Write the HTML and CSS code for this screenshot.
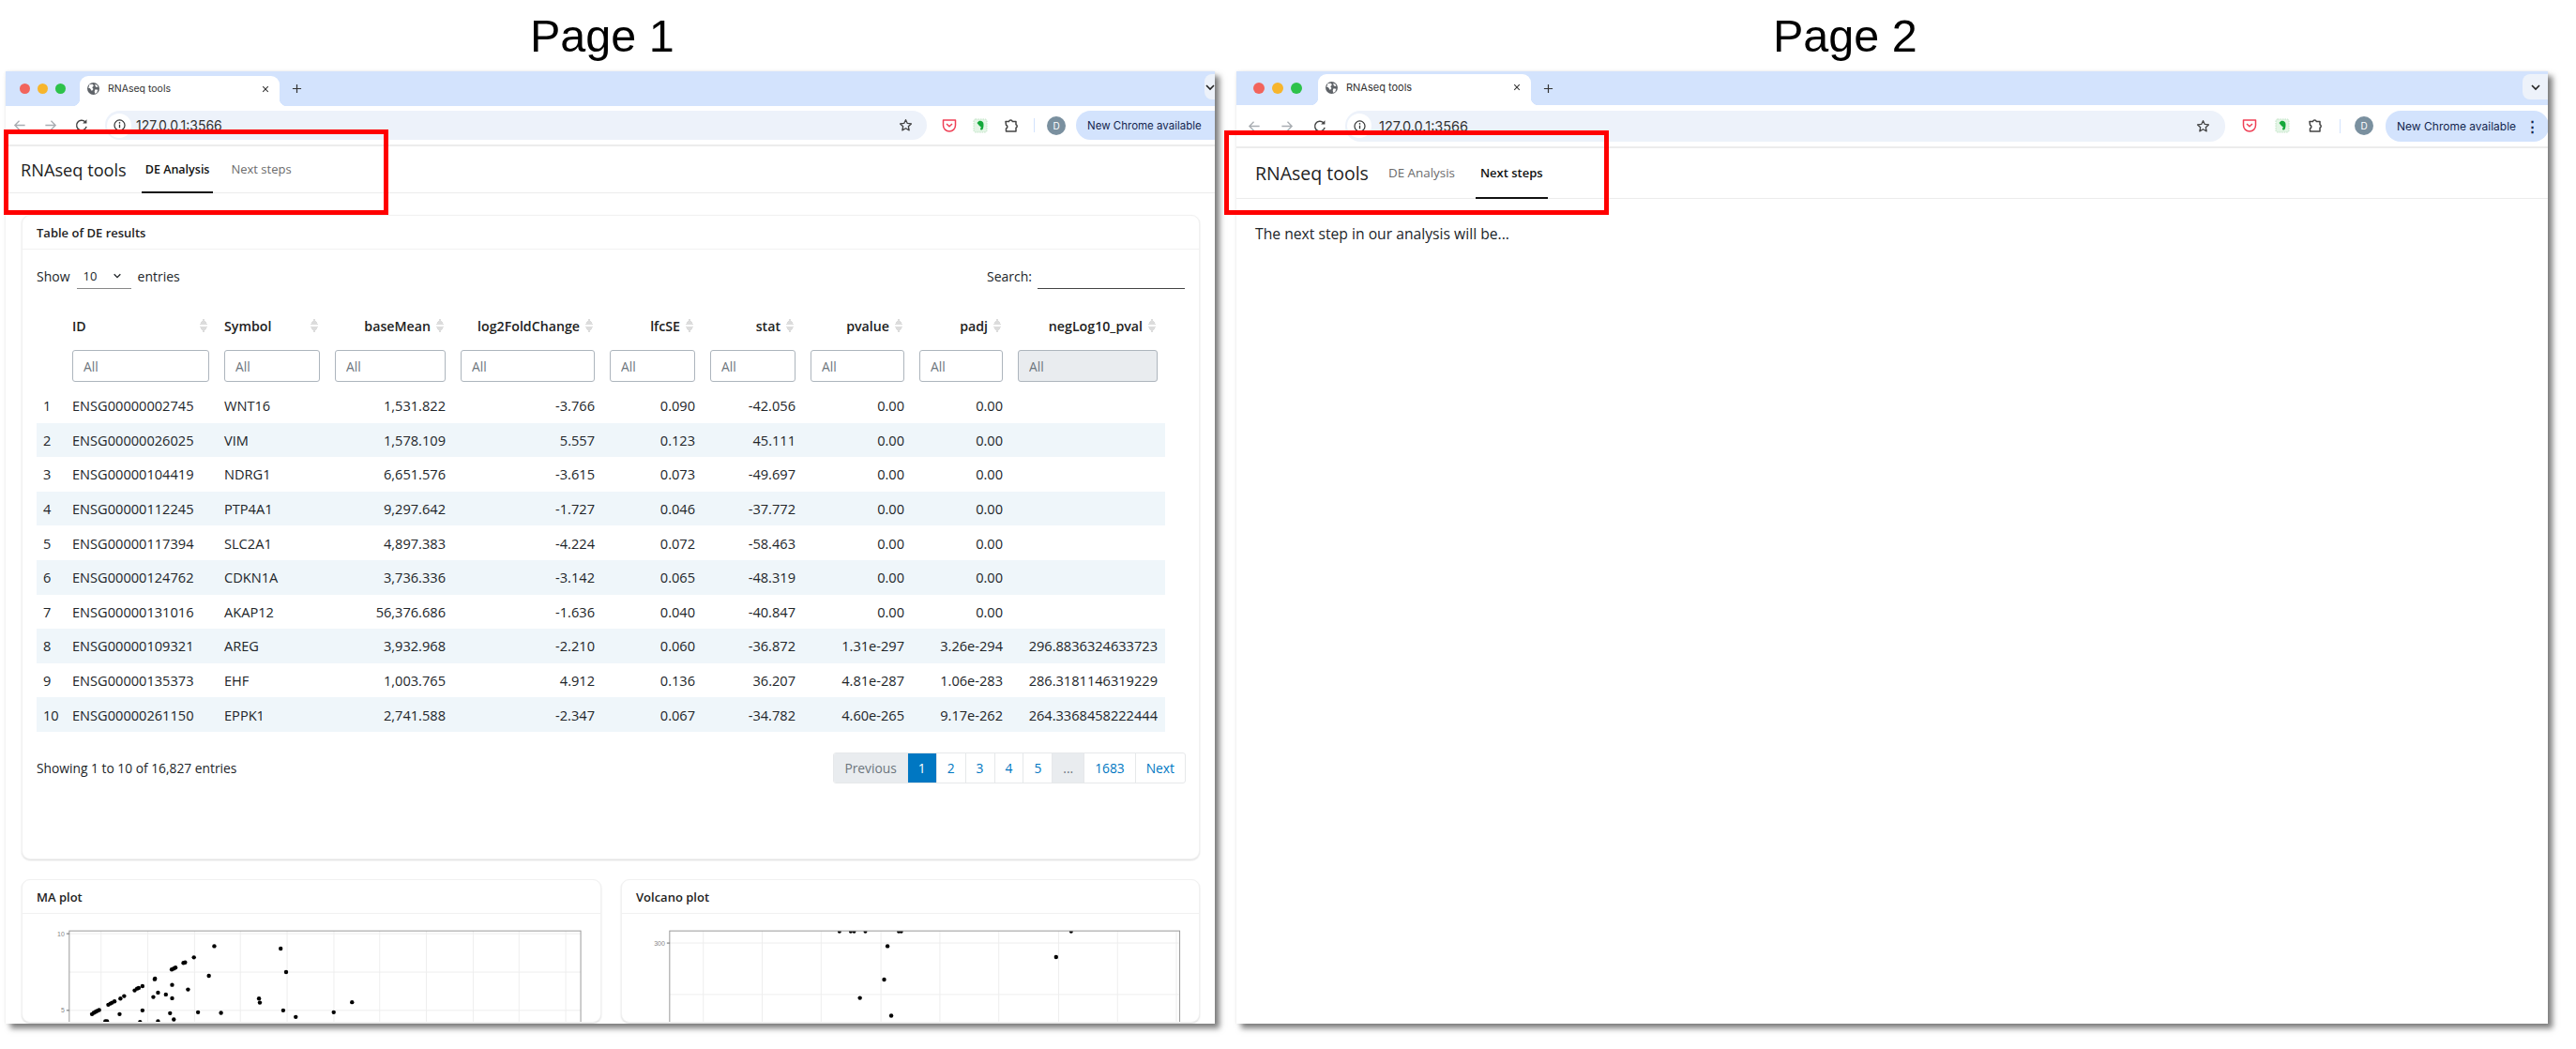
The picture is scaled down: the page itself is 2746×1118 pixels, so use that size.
FILE: index.html
```html
<!DOCTYPE html>
<html lang="en">
<head>
  <meta charset="UTF-8">
  <title>RNAseq tools - Page 1 and Page 2</title>
  <link rel="stylesheet" href="styles.css">
</head>
<body>
  <svg class="icon-defs" width="0" height="0" aria-hidden="true">
    <symbol id="i-globe" viewBox="0 0 16 16">
      <circle cx="8" cy="8" r="8" fill="#5f6368"/>
      <path d="M3 2.5 7 2l1.500 2-2 2.500 1.500 2L6 11 3.500 7.500 1.500 7zM10.500 9l3.500.5-1.500 4-2.500 1-.5-3zM10 2l3 1.500 1 2.500-3-.5z" fill="#fff"/>
    </symbol>
    <symbol id="i-back" viewBox="0 0 16 16">
      <path d="M14 8H2.500M7.500 3 2.500 8l5 5" fill="none" stroke="currentColor" stroke-width="1.400"/>
    </symbol>
    <symbol id="i-forward" viewBox="0 0 16 16">
      <path d="M2 8h11.500M8.500 3l5 5-5 5" fill="none" stroke="currentColor" stroke-width="1.400"/>
    </symbol>
    <symbol id="i-reload" viewBox="0 0 16 16">
      <path d="M13.500 9.500A5.700 5.700 0 1 1 12 4" fill="none" stroke="#444" stroke-width="1.500"/>
      <path d="M13.800 1.200v4.600H9.200z" fill="#444"/>
    </symbol>
    <symbol id="i-info" viewBox="0 0 16 16">
      <circle cx="8" cy="8" r="6.800" fill="none" stroke="#333" stroke-width="1.500"/>
      <path d="M8 7v4.500" stroke="#333" stroke-width="1.600"/>
      <circle cx="8" cy="4.800" r="1" fill="#333"/>
    </symbol>
    <symbol id="i-star" viewBox="0 0 16 16">
      <path d="m8 1.800 1.900 4 4.400.5-3.300 3 .9 4.400L8 11.500l-3.900 2.200.9-4.400-3.300-3 4.400-.5z" fill="none" stroke="#444" stroke-width="1.400" stroke-linejoin="round"/>
    </symbol>
    <symbol id="i-pocket" viewBox="0 0 16 16">
      <path d="M1.500 2h13v5.500a6.500 6.500 0 0 1-13 0z" fill="#fff" stroke="#ef4056" stroke-width="1.500" stroke-linejoin="round"/>
      <path d="m5 6 3 2.800L11 6" fill="none" stroke="#ef4056" stroke-width="1.500"/>
    </symbol>
    <symbol id="i-evernote" viewBox="0 0 16 16">
      <rect x="1" y="1" width="14" height="14" rx="2" fill="#e4f5e6" stroke="#bfe3c4" stroke-dasharray="1.500 1"/>
      <path d="M4.500 5 6.500 3c2-.8 5 0 5 3.500 0 2.500-.3 4-1 5.500-1.200 1-2.500.3-2.500-.8 0-1 1-1 1.300-.7-.5-1.500-2.300-2-3-3.200z" fill="#14a83b"/>
    </symbol>
    <symbol id="i-puzzle" viewBox="0 0 16 16">
      <path d="M2 3.500h3.500a2 2 0 0 1 3.800 0H13v3.300a1.800 1.800 0 0 1 0 3.400V14H2.500v-3a2 2 0 0 0 0-3.800z" fill="none" stroke="#444" stroke-width="1.500" stroke-linejoin="round"/>
    </symbol>
    <symbol id="i-chevron" viewBox="0 0 12 12">
      <path d="m2 4 4 4 4-4" fill="none" stroke="currentColor" stroke-width="1.600"/>
    </symbol>
    <symbol id="i-close" viewBox="0 0 10 10">
      <path d="m1.500 1.500 7 7m0-7-7 7" stroke="#333" stroke-width="1.300"/>
    </symbol>
    <symbol id="i-plus" viewBox="0 0 12 12">
      <path d="M6 1v10M1 6h10" stroke="#333" stroke-width="1.300"/>
    </symbol>
  </svg>

  <div class="headings">
    <h1 class="heading heading-1">Page 1</h1>
    <h1 class="heading heading-2">Page 2</h1>
  </div>

  <div class="shots">
    <!-- Page 1 -->
    <div class="shot shot-1">
      <div class="window">
        <div class="tabstrip">
          <div class="lights"><i class="light red"></i><i class="light amber"></i><i class="light green"></i></div>
          <div class="tab">
            <svg class="tab-fav"><use href="#i-globe"/></svg>
            <span class="tab-title">RNAseq tools</span>
            <svg class="tab-close"><use href="#i-close"/></svg>
          </div>
          <svg class="tab-plus"><use href="#i-plus"/></svg>
          <span class="tab-search"><svg class="tab-search-icon"><use href="#i-chevron"/></svg></span>
        </div>
        <div class="toolbar">
          <svg class="tool dim"><use href="#i-back"/></svg>
          <svg class="tool dim"><use href="#i-forward"/></svg>
          <svg class="tool"><use href="#i-reload"/></svg>
          <div class="omnibox">
            <span class="info-chip"><svg class="info-icon"><use href="#i-info"/></svg></span>
            <span class="url">127.0.0.1:3566</span>
            <svg class="star"><use href="#i-star"/></svg>
          </div>
          <svg class="tool ext first-ext"><use href="#i-pocket"/></svg>
          <svg class="tool ext"><use href="#i-evernote"/></svg>
          <svg class="tool ext"><use href="#i-puzzle"/></svg>
          <i class="divider"></i>
          <span class="avatar">D</span>
          <span class="update-chip">New Chrome available <span class="update-dots">&#8942;</span></span>
        </div>
        <nav class="navbar">
          <span class="brand">RNAseq tools</span>
          <a class="nav-tab active">DE Analysis</a>
          <a class="nav-tab">Next steps</a>
        </nav>
        <main class="page-main">
          <section class="card table-card">
            <header class="card-header">Table of DE results</header>
            <div class="card-body">
              <div class="dt-top">
                <div class="dt-length">
                  <span>Show</span>
                  <span class="dt-select">10 <svg class="dt-chevron"><use href="#i-chevron"/></svg></span>
                  <span>entries</span>
                </div>
                <div class="dt-search">
                  <span>Search:</span>
                  <span class="dt-search-input"></span>
                </div>
              </div>
              <table class="dt">
                <colgroup>
                  <col class="c-num"><col class="c-id"><col class="c-sym"><col class="c-base"><col class="c-fold">
                  <col class="c-se"><col class="c-stat"><col class="c-p"><col class="c-adj"><col class="c-neg">
                </colgroup>
                <thead>
                  <tr class="head-row">
                    <th></th>
                    <th><div class="th-in spread">ID<i class="sort"></i></div></th>
                    <th><div class="th-in spread">Symbol<i class="sort"></i></div></th>
                    <th><div class="th-in">baseMean<i class="sort"></i></div></th>
                    <th><div class="th-in">log2FoldChange<i class="sort"></i></div></th>
                    <th><div class="th-in">lfcSE<i class="sort"></i></div></th>
                    <th><div class="th-in">stat<i class="sort"></i></div></th>
                    <th><div class="th-in">pvalue<i class="sort"></i></div></th>
                    <th><div class="th-in">padj<i class="sort"></i></div></th>
                    <th><div class="th-in">negLog10_pval<i class="sort"></i></div></th>
                  </tr>
                  <tr class="filter-row">
                    <th></th>
                    <th><input class="filter" placeholder="All"></th>
                    <th><input class="filter" placeholder="All"></th>
                    <th><input class="filter" placeholder="All"></th>
                    <th><input class="filter" placeholder="All"></th>
                    <th><input class="filter" placeholder="All"></th>
                    <th><input class="filter" placeholder="All"></th>
                    <th><input class="filter" placeholder="All"></th>
                    <th><input class="filter" placeholder="All"></th>
                    <th><input class="filter off" placeholder="All" disabled></th>
                  </tr>
                </thead>
                <tbody>
                  <tr><td>1</td><td>ENSG00000002745</td><td>WNT16</td><td class="n">1,531.822</td><td class="n">-3.766</td><td class="n">0.090</td><td class="n">-42.056</td><td class="n">0.00</td><td class="n">0.00</td><td class="n"></td></tr>
                  <tr><td>2</td><td>ENSG00000026025</td><td>VIM</td><td class="n">1,578.109</td><td class="n">5.557</td><td class="n">0.123</td><td class="n">45.111</td><td class="n">0.00</td><td class="n">0.00</td><td class="n"></td></tr>
                  <tr><td>3</td><td>ENSG00000104419</td><td>NDRG1</td><td class="n">6,651.576</td><td class="n">-3.615</td><td class="n">0.073</td><td class="n">-49.697</td><td class="n">0.00</td><td class="n">0.00</td><td class="n"></td></tr>
                  <tr><td>4</td><td>ENSG00000112245</td><td>PTP4A1</td><td class="n">9,297.642</td><td class="n">-1.727</td><td class="n">0.046</td><td class="n">-37.772</td><td class="n">0.00</td><td class="n">0.00</td><td class="n"></td></tr>
                  <tr><td>5</td><td>ENSG00000117394</td><td>SLC2A1</td><td class="n">4,897.383</td><td class="n">-4.224</td><td class="n">0.072</td><td class="n">-58.463</td><td class="n">0.00</td><td class="n">0.00</td><td class="n"></td></tr>
                  <tr><td>6</td><td>ENSG00000124762</td><td>CDKN1A</td><td class="n">3,736.336</td><td class="n">-3.142</td><td class="n">0.065</td><td class="n">-48.319</td><td class="n">0.00</td><td class="n">0.00</td><td class="n"></td></tr>
                  <tr><td>7</td><td>ENSG00000131016</td><td>AKAP12</td><td class="n">56,376.686</td><td class="n">-1.636</td><td class="n">0.040</td><td class="n">-40.847</td><td class="n">0.00</td><td class="n">0.00</td><td class="n"></td></tr>
                  <tr><td>8</td><td>ENSG00000109321</td><td>AREG</td><td class="n">3,932.968</td><td class="n">-2.210</td><td class="n">0.060</td><td class="n">-36.872</td><td class="n">1.31e-297</td><td class="n">3.26e-294</td><td class="n">296.8836324633723</td></tr>
                  <tr><td>9</td><td>ENSG00000135373</td><td>EHF</td><td class="n">1,003.765</td><td class="n">4.912</td><td class="n">0.136</td><td class="n">36.207</td><td class="n">4.81e-287</td><td class="n">1.06e-283</td><td class="n">286.3181146319229</td></tr>
                  <tr><td>10</td><td>ENSG00000261150</td><td>EPPK1</td><td class="n">2,741.588</td><td class="n">-2.347</td><td class="n">0.067</td><td class="n">-34.782</td><td class="n">4.60e-265</td><td class="n">9.17e-262</td><td class="n">264.3368458222444</td></tr>
                </tbody>
              </table>
              <div class="dt-bottom">
                <span class="dt-info">Showing 1 to 10 of 16,827 entries</span>
                <div class="pager">
                  <span class="pg off">Previous</span>
                  <span class="pg cur">1</span>
                  <span class="pg">2</span>
                  <span class="pg">3</span>
                  <span class="pg">4</span>
                  <span class="pg">5</span>
                  <span class="pg off">...</span>
                  <span class="pg">1683</span>
                  <span class="pg">Next</span>
                </div>
              </div>
            </div>
          </section>

          <div class="plot-row">
            <section class="card">
              <header class="card-header">MA plot</header>
              <svg class="plot" viewBox="23 976 618 115">
                <g class="grid">
                  <path d="M107 994v97M157 994v97M207 994v97M256 994v97M306 994v97M356 994v97M405 994v97M455 994v97M505 994v97M554 994v97M604 994v97M73 997h547M73 1038h547M73 1079h547"/>
                </g>
                <rect class="panel" x="73" y="994" width="547" height="110"/>
                <path class="tick" d="M70 997h3M70 1079h3"/>
                <text class="tick-label" x="68" y="999.500">10</text>
                <text class="tick-label" x="68" y="1081.500">5</text>
                <g class="pts">
                  <circle cx="228.100" cy="1010.300" r="2.200"/><circle cx="299.100" cy="1013" r="2.200"/><circle cx="206.300" cy="1022.300" r="2.200"/>
                  <circle cx="195.100" cy="1028.300" r="2.200"/><circle cx="196.900" cy="1027.700" r="2.200"/><circle cx="182.600" cy="1035.300" r="2.200"/>
                  <circle cx="184.800" cy="1034.300" r="2.200"/><circle cx="186.600" cy="1033.300" r="2.200"/><circle cx="222.300" cy="1042" r="2.200"/>
                  <circle cx="304.900" cy="1038" r="2.200"/><circle cx="183" cy="1051.700" r="2.200"/><circle cx="164.300" cy="1045.700" r="2.200"/>
                  <circle cx="164.700" cy="1045" r="2.200"/><circle cx="200" cy="1056.700" r="2.200"/><circle cx="151.300" cy="1053" r="2.200"/>
                  <circle cx="147.300" cy="1055" r="2.200"/><circle cx="145.500" cy="1055.700" r="2.200"/><circle cx="142.900" cy="1057.700" r="2.200"/>
                  <circle cx="167.900" cy="1060" r="2.200"/><circle cx="176.300" cy="1062" r="2.200"/><circle cx="162.900" cy="1064.700" r="2.200"/>
                  <circle cx="131.700" cy="1063.700" r="2.200"/><circle cx="127.700" cy="1066.300" r="2.200"/><circle cx="183" cy="1066" r="2.200"/>
                  <circle cx="121.400" cy="1069.300" r="2.200"/><circle cx="118.800" cy="1070.700" r="2.200"/><circle cx="117" cy="1071.700" r="2.200"/>
                  <circle cx="114.700" cy="1073" r="2.200"/><circle cx="275.900" cy="1066.300" r="2.200"/><circle cx="276.800" cy="1070.700" r="2.200"/>
                  <circle cx="375.400" cy="1070.300" r="2.200"/><circle cx="151.300" cy="1079" r="2.200"/><circle cx="210.700" cy="1081" r="2.200"/>
                  <circle cx="235.300" cy="1081.700" r="2.200"/><circle cx="180.800" cy="1082" r="2.200"/><circle cx="301.800" cy="1079" r="2.200"/>
                  <circle cx="355.800" cy="1081" r="2.200"/><circle cx="315.200" cy="1086" r="2.200"/><circle cx="126.800" cy="1083" r="2.200"/>
                  <circle cx="104.900" cy="1078.700" r="2.200"/><circle cx="102.700" cy="1079.700" r="2.200"/><circle cx="100.900" cy="1080.700" r="2.200"/>
                  <circle cx="99.100" cy="1081.700" r="2.200"/><circle cx="97.300" cy="1083" r="2.200"/><circle cx="184.800" cy="1088.700" r="2.200"/>
                  <circle cx="113.400" cy="1090.700" r="2.200"/><circle cx="111.600" cy="1090.700" r="2.200"/><circle cx="148.700" cy="1091.500" r="2.200"/>
                  <circle cx="167.900" cy="1090.700" r="2.200"/>
                </g>
              </svg>
            </section>
            <section class="card">
              <header class="card-header">Volcano plot</header>
              <svg class="plot" viewBox="662 976 617 115">
                <g class="grid">
                  <path d="M749 994v97M812 994v97M875 994v97M939 994v97M1002 994v97M1065 994v97M1129 994v97M1192 994v97M1255 994v97M713 1007h545M713 1062h545"/>
                </g>
                <g class="pts">
                  <circle cx="894.600" cy="994.700" r="2"/><circle cx="906.700" cy="994.700" r="2"/><circle cx="910.300" cy="994.700" r="2"/>
                  <circle cx="922.300" cy="994.700" r="2"/><circle cx="958" cy="994.700" r="2"/><circle cx="960.700" cy="994.700" r="2"/>
                  <circle cx="1142.400" cy="994.700" r="2"/><circle cx="946" cy="1010.300" r="2.200"/><circle cx="1126.300" cy="1022" r="2.200"/>
                  <circle cx="942.400" cy="1046" r="2.200"/><circle cx="916.500" cy="1065.700" r="2.200"/><circle cx="950" cy="1084.700" r="2.200"/>
                </g>
                <rect class="cover" x="700" y="985" width="570" height="9"/>
                <rect class="panel" x="713" y="994" width="545.500" height="110"/>
                <path class="tick" d="M710 1007h3"/>
                <text class="tick-label" x="708" y="1009.500">300</text>
              </svg>
            </section>
          </div>
        </main>
      </div>
      <div class="red-box"></div>
    </div>

    <!-- Page 2 -->
    <div class="shot shot-2">
      <div class="window">
        <div class="tabstrip">
          <div class="lights"><i class="light red"></i><i class="light amber"></i><i class="light green"></i></div>
          <div class="tab">
            <svg class="tab-fav"><use href="#i-globe"/></svg>
            <span class="tab-title">RNAseq tools</span>
            <svg class="tab-close"><use href="#i-close"/></svg>
          </div>
          <svg class="tab-plus"><use href="#i-plus"/></svg>
          <span class="tab-search"><svg class="tab-search-icon"><use href="#i-chevron"/></svg></span>
        </div>
        <div class="toolbar">
          <svg class="tool dim"><use href="#i-back"/></svg>
          <svg class="tool dim"><use href="#i-forward"/></svg>
          <svg class="tool"><use href="#i-reload"/></svg>
          <div class="omnibox">
            <span class="info-chip"><svg class="info-icon"><use href="#i-info"/></svg></span>
            <span class="url">127.0.0.1:3566</span>
            <svg class="star"><use href="#i-star"/></svg>
          </div>
          <svg class="tool ext first-ext"><use href="#i-pocket"/></svg>
          <svg class="tool ext"><use href="#i-evernote"/></svg>
          <svg class="tool ext"><use href="#i-puzzle"/></svg>
          <i class="divider"></i>
          <span class="avatar">D</span>
          <span class="update-chip">New Chrome available <span class="update-dots">&#8942;</span></span>
        </div>
        <nav class="navbar">
          <span class="brand">RNAseq tools</span>
          <a class="nav-tab">DE Analysis</a>
          <a class="nav-tab active">Next steps</a>
        </nav>
        <main class="page-main">
          <p class="next-text">The next step in our analysis will be...</p>
        </main>
      </div>
      <div class="red-box"></div>
    </div>
  </div>
</body>
</html>
```

FILE: styles.css
```css
:root {
  --strip: #d3e3fd;
  --omni: #edf2fa;
  --line: #ececec;
  --card-line: #f1f1f1;
  --text: #212529;
  --blue: #0077c2;
}
html, body {
  margin: 0;
  padding: 0;
  background: #fff;
}
body {
  width: 2746px;
  height: 1118px;
  overflow: hidden;
  font-family: "Open Sans", "Noto Sans", sans-serif;
  color: var(--text);
}
.icon-defs {
  position: absolute;
}

/* HEADINGS */
.headings {
  display: flex;
  height: 76px;
  align-items: center;
}
.heading {
  margin: 0;
  font-family: "Liberation Sans", Arial, sans-serif;
  font-size: 48.500px;
  font-weight: 400;
  color: #000;
  text-align: center;
  width: 152px;
  white-space: nowrap;
}
.heading-1 { margin-left: 565px; }
.heading-2 { margin-left: 1173px; }

/* WINDOWS */
.shots {
  display: flex;
  gap: 23px;
  padding-left: 6px;
}
.shot {
  position: relative;
}
.shot-1 { width: 1289px; }
.shot-2 { width: 1398px; }
.window {
  height: 1015px;
  overflow: hidden;
  background: #fff;
  box-shadow: 5px 5px 6px rgba(0,0,0,.5), 0 0 3px rgba(0,0,0,.08);
}
.red-box {
  position: absolute;
  box-sizing: border-box;
  border: 5px solid #ff0000;
  pointer-events: none;
}
.shot-1 .red-box { left: -2px; top: 62px; width: 410px; height: 91px; }
.shot-2 .red-box { left: -13px; top: 63px; width: 410px; height: 90px; }

/* TAB STRIP */
.tabstrip {
  display: flex;
  align-items: flex-end;
  background: var(--strip);
  height: 37px;
  position: relative;
}
.shot-2 .tabstrip { height: 36px; }
.lights {
  display: flex;
  align-self: center;
  gap: 8px;
  padding-left: 15px;
  width: 58px;
}
.shot-2 .lights { padding-left: 18px; gap: 8px; width: 69px; }
.light {
  width: 11px;
  height: 11px;
  border-radius: 50%;
}
.shot-2 .light { width: 12px; height: 12px; }
.red { background: #f2645c; }
.amber { background: #f7b52c; }
.green { background: #2dc24a; }
.tab {
  position: relative;
  display: flex;
  align-items: center;
  background: #fff;
  border-radius: 9px 9px 0 0;
  height: 32px;
  width: 213px;
  margin-left: 6px;
  padding: 0 8px 5px 8px;
  box-sizing: border-box;
  font-family: Inter, "Noto Sans", sans-serif;
  font-size: 10.500px;
  color: #333;
}
.shot-2 .tab {
  height: 33px;
  width: 227px;
  margin-left: 0;
  font-size: 11px;
}
.tab::before,
.tab::after {
  content: "";
  position: absolute;
  bottom: 0;
  width: 8px;
  height: 8px;
}
.tab::before {
  left: -8px;
  background: radial-gradient(circle at 0 0, var(--strip) 8px, #fff 8.500px);
}
.tab::after {
  right: -8px;
  background: radial-gradient(circle at 100% 0, var(--strip) 8px, #fff 8.500px);
}
.tab-fav {
  width: 13px;
  height: 13px;
  flex: none;
}
.tab-title {
  margin-left: 9px;
  flex: 1;
}
.tab-close {
  width: 8px;
  height: 8px;
  margin-right: 3px;
}
.tab-plus {
  width: 11px;
  height: 11px;
  align-self: center;
  margin-left: 13px;
}
.tab-search {
  position: absolute;
  right: 0;
  top: 3px;
  width: 27px;
  height: 27px;
  background: var(--omni);
  border-radius: 8px 0 0 8px;
  display: flex;
  align-items: center;
  justify-content: center;
  color: #222;
}
.shot-1 .tab-search { width: 11px; }
.tab-search-icon {
  width: 12px;
  height: 12px;
  flex: none;
}

/* TOOLBAR */
.toolbar {
  display: flex;
  align-items: center;
  background: #fff;
  height: 41px;
  border-bottom: 2px solid var(--line);
  gap: 3px;
  overflow: hidden;
  font-family: Inter, "Noto Sans", sans-serif;
}
.shot-2 .toolbar {
  height: 44px;
  gap: 5px;
  padding-left: 4px;
}
.tool {
  width: 30px;
  height: 15px;
  flex: none;
}
.dim { color: #a9adb2; }
.omnibox {
  display: flex;
  align-items: center;
  background: var(--omni);
  border-radius: 16px;
  flex: none;
  width: 876px;
  height: 31px;
  margin-left: 7px;
  box-sizing: border-box;
  padding-right: 15px;
}
.shot-2 .omnibox {
  width: 938px;
  height: 33px;
  margin-left: 7px;
  padding-right: 16px;
}
.info-chip {
  width: 26px;
  height: 26px;
  margin-left: 2px;
  border-radius: 50%;
  background: #fff;
  display: flex;
  align-items: center;
  justify-content: center;
}
.info-icon {
  width: 13px;
  height: 13px;
}
.url {
  margin-left: 5px;
  font-size: 14px;
  color: #333;
  flex: 1;
}
.shot-2 .url { margin-left: 8px; font-size: 14.500px; }
.star {
  width: 15px;
  height: 15px;
}
.first-ext { margin-left: 6px; }
.ext { height: 16px; }
.divider {
  width: 1px;
  height: 15px;
  background: var(--strip);
  margin-left: 6px;
  flex: none;
}
.avatar {
  width: 20px;
  height: 20px;
  flex: none;
  border-radius: 50%;
  background: #7a909f;
  color: #fff;
  font-size: 10px;
  text-align: center;
  line-height: 20px;
  margin-left: 10px;
}
.update-chip {
  flex: none;
  display: flex;
  align-items: center;
  justify-content: space-between;
  width: 174px;
  height: 31px;
  box-sizing: border-box;
  padding: 0 10px 0 12px;
  margin-left: 8px;
  background: var(--strip);
  border-radius: 16px;
  font-size: 11.500px;
  color: #14264f;
  white-space: nowrap;
}
.shot-2 .update-chip { height: 33px; font-size: 12px; }
.update-dots {
  font-size: 15px;
  font-weight: 700;
}

/* NAVBAR */
.navbar {
  display: flex;
  align-items: stretch;
  height: 50px;
  padding-left: 16px;
  border-bottom: 1px solid var(--line);
  box-sizing: border-box;
  color: #222;
}
.shot-2 .navbar {
  height: 54px;
  padding-left: 20px;
}
.brand {
  font-size: 18.200px;
  align-self: center;
  margin-right: 16px;
}
.shot-2 .brand { font-size: 19.500px; margin-right: 16px; }
.nav-tab {
  display: flex;
  align-items: center;
  font-size: 13px;
  padding: 0 4px;
  margin-right: 15px;
  color: #6b6b6b;
  border-bottom: 2px solid transparent;
  margin-bottom: -1px;
}
.shot-2 .nav-tab {
  font-size: 13.400px;
  padding: 0 5px;
  margin-right: 17px;
}
.nav-tab.active {
  color: #111;
  font-weight: 600;
  font-size: 12.500px;
  border-bottom-color: #111;
}
.shot-2 .nav-tab.active {
  font-size: 13px;
}

/* PAGE */
.page-main {
  padding: 23px 16px 0 17px;
}
.next-text {
  margin: 17px 0 0 3px;
  font-size: 15.700px;
}
.shot-2 .page-main { padding-top: 9px; }
.card {
  background: #fff;
  border: 1px solid var(--card-line);
  border-radius: 9px;
  box-shadow: 0 1px 2px rgba(0,0,0,.14);
  box-sizing: border-box;
  overflow: hidden;
}
.table-card {
  height: 687px;
}
.card-header {
  height: 35px;
  padding: 0 15px;
  display: flex;
  align-items: center;
  border-bottom: 1px solid var(--card-line);
  font-size: 13px;
  font-weight: 600;
  color: #222;
}
.card-body {
  padding: 14px 15px 0 15px;
  font-size: 14px;
}
.dt-top {
  display: flex;
  justify-content: space-between;
  align-items: center;
  height: 28px;
}
.dt-length {
  display: flex;
  align-items: center;
  gap: 7px;
}
.dt-select {
  display: flex;
  align-items: center;
  justify-content: space-between;
  box-sizing: border-box;
  width: 58px;
  height: 28px;
  padding: 0 10px 0 7px;
  border-bottom: 1px solid #888;
  font-size: 13px;
}
.dt-chevron {
  width: 10px;
  height: 10px;
}
.dt-search {
  display: flex;
  align-items: center;
  gap: 6px;
}
.dt-search-input {
  display: block;
  width: 157px;
  height: 28px;
  box-sizing: border-box;
  border-bottom: 1px solid #444;
}

/* TABLE */
.dt {
  table-layout: fixed;
  border-collapse: collapse;
  width: 1203px;
  margin-top: 27px;
}
.c-num { width: 30px; }
.c-id { width: 162px; }
.c-sym { width: 118px; }
.c-base { width: 134px; }
.c-fold { width: 159px; }
.c-se { width: 107px; }
.c-stat { width: 107px; }
.c-p { width: 116px; }
.c-adj { width: 105px; }
.c-neg { width: 165px; }
.head-row th {
  height: 24px;
  padding: 0 10px 0 8px;
  font-weight: 600;
  font-size: 14.200px;
  color: #222;
}
.th-in {
  display: flex;
  justify-content: flex-end;
  align-items: center;
  gap: 6px;
  white-space: nowrap;
}
.th-in.spread {
  justify-content: space-between;
}
.sort {
  width: 8px;
  height: 16px;
  flex: none;
  background:
    linear-gradient(to top left, #dcdcdc 50%, transparent 50%) 0 0 / 4px 7px no-repeat,
    linear-gradient(to top right, #dcdcdc 50%, transparent 50%) 100% 0 / 4px 7px no-repeat,
    linear-gradient(to bottom left, #dcdcdc 50%, transparent 50%) 0 100% / 4px 7px no-repeat,
    linear-gradient(to bottom right, #dcdcdc 50%, transparent 50%) 100% 100% / 4px 7px no-repeat;
}
.filter-row th {
  padding: 14px 8px 7px 8px;
}
.filter {
  display: block;
  width: 100%;
  height: 34px;
  box-sizing: border-box;
  border: 1px solid #adb5bd;
  border-radius: 3px;
  padding: 0 11px;
  font-family: inherit;
  font-size: 13.800px;
  background: #fff;
}
.filter::placeholder {
  color: #6c757d;
  opacity: 1;
}
.filter.off {
  background: #e9ecef;
}
.dt td {
  height: 36.600px;
  padding: 0 8px;
  box-sizing: border-box;
  white-space: nowrap;
  font-size: 14.600px;
}
.dt td:first-child {
  padding-left: 7px;
  padding-right: 0;
}
.dt td.n {
  text-align: right;
}
.dt tbody tr:nth-child(even) {
  background: #eff6fa;
}
.dt-bottom {
  display: flex;
  justify-content: space-between;
  align-items: center;
  margin-top: 22px;
  width: 1225px;
  font-size: 13.800px;
}
.pager {
  display: flex;
  height: 33px;
  box-sizing: border-box;
  border: 1px solid #e6e8ea;
  border-radius: 3px;
  overflow: hidden;
}
.pg {
  display: flex;
  align-items: center;
  padding: 0 11px;
  color: var(--blue);
  border-right: 1px solid #e6e8ea;
}
.pg:last-child {
  border-right: 0;
}
.pg.off {
  background: #e9ecef;
  color: #6c757d;
}
.pg.cur {
  background: var(--blue);
  color: #fff;
}

/* PLOTS */
.plot-row {
  display: grid;
  grid-template-columns: 618px 617px;
  gap: 21px;
  margin-top: 21px;
}
.plot {
  display: block;
  width: 100%;
  height: 115px;
}
.grid path {
  stroke: #eeeeee;
  stroke-width: 1;
  fill: none;
}
.panel {
  fill: none;
  stroke: #9a9a9a;
  stroke-width: 1;
}
.cover {
  fill: #fff;
}
.tick {
  stroke: #666;
  stroke-width: 1;
  fill: none;
}
.tick-label {
  font-family: "Liberation Sans", Arial, sans-serif;
  font-size: 7px;
  fill: #888;
  text-anchor: end;
}
.pts circle {
  fill: #000;
}
```
